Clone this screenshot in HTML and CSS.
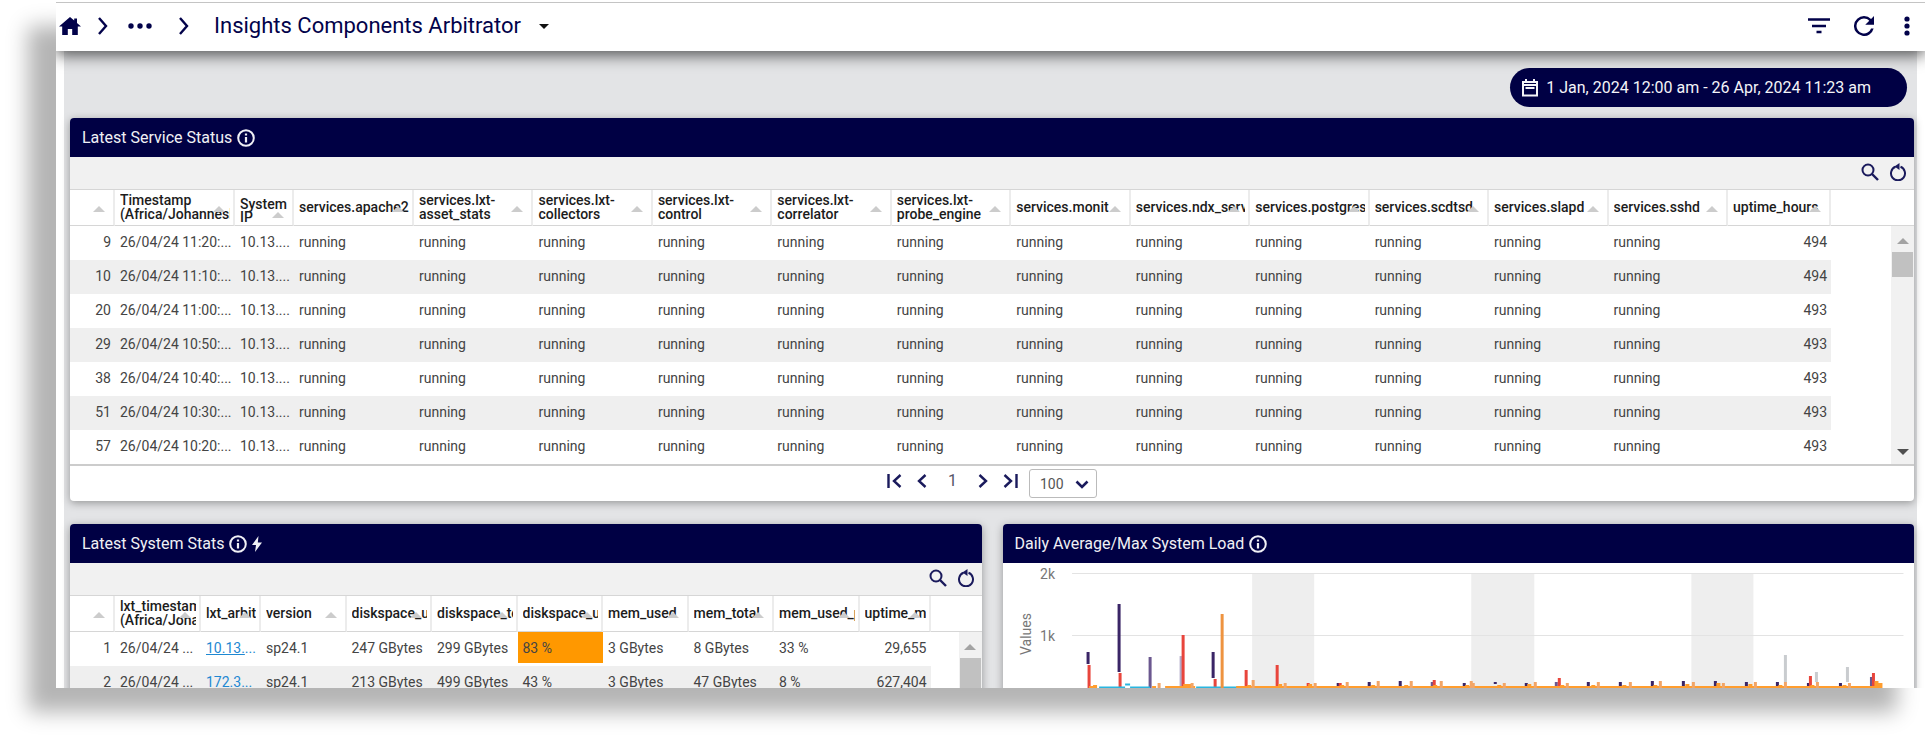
FILE: index.html
```html
<!DOCTYPE html>
<html lang="en">
<head>
    <meta charset="UTF-8">
    <title>Insights Components Arbitrator</title>
    <link rel="stylesheet" href="styles.css">
</head>
<body>

    <div class="window">
        <header class="topbar">
            <nav class="crumbs">
                <a href="#" class="home" aria-label="Home"><svg width="22" height="18" viewBox="0 0 22 18"><path d="M11 0L0 9.500h3.200V18h5.600v-6h4.400v6h5.600V9.500H22L18 6V1.500h-2.800v2.100z" fill="currentColor"/></svg></a>
                <svg class="sep" width="12" height="18" viewBox="0 0 12 18"><path d="M2 1l7 8-7 8" fill="none" stroke="currentColor" stroke-width="2.400"/></svg>
                <button class="dots" aria-label="More levels"><svg width="24" height="6" viewBox="0 0 24 6"><circle cx="3" cy="3" r="2.700"/><circle cx="12" cy="3" r="2.700"/><circle cx="21" cy="3" r="2.700"/></svg></button>
                <svg class="sep" width="12" height="18" viewBox="0 0 12 18"><path d="M2 1l7 8-7 8" fill="none" stroke="currentColor" stroke-width="2.400"/></svg>
                <button class="title">Insights Components Arbitrator <span class="caret"></span></button>
            </nav>
            <div class="actions">
                <button aria-label="Filter"><svg width="22" height="16" viewBox="0 0 22 16"><path d="M0 1.500h22M4 8h14M8.500 14h5" stroke="currentColor" stroke-width="2.400"/></svg></button>
                <button aria-label="Refresh"><svg width="20" height="20" viewBox="4 4 16 16"><path d="M17.650 6.350A7.960 7.960 0 0 0 12 4a8 8 0 1 0 7.730 10h-2.080A6 6 0 1 1 12 6c1.660 0 3.140.69 4.220 1.780L13 11h7V4z" fill="currentColor"/></svg></button>
                <button aria-label="Menu"><svg width="6" height="20" viewBox="0 0 6 20"><circle cx="3" cy="3" r="2.600"/><circle cx="3" cy="10" r="2.600"/><circle cx="3" cy="17" r="2.600"/></svg></button>
            </div>
        </header>

        <main class="board">
            <div class="range-row">
                <button class="range">
                    <svg width="16" height="18" viewBox="0 0 16 18"><path d="M1 3h14v13.500H1zM1 6h14" fill="none" stroke="currentColor" stroke-width="2"/><path d="M4 0v3M12 0v3" stroke="currentColor" stroke-width="2"/><path d="M3.500 9h9" stroke="currentColor" stroke-width="2"/></svg>
                    1 Jan, 2024 12:00 am - 26 Apr, 2024 11:23 am
                </button>
            </div>

            <section class="panel">
                <h2>Latest Service Status
                    <svg class="info" width="18" height="18" viewBox="0 0 18 18"><circle cx="9" cy="9" r="7.800" fill="none" stroke="currentColor" stroke-width="2"/><path d="M9 4.500v2M9 8v5.500" stroke="currentColor" stroke-width="2.200"/></svg>
                </h2>
                <div class="toolbar">
                    <button aria-label="Search"><svg width="18" height="18" viewBox="0 0 18 18"><circle cx="7" cy="7" r="5.500" fill="none" stroke="currentColor" stroke-width="2"/><path d="M11 11l6 6" stroke="currentColor" stroke-width="2.400"/></svg></button>
                    <button aria-label="Reset"><svg width="18" height="18" viewBox="0 0 18 18"><path d="M6.500 3.800a7 7 0 1 0 5 0" fill="none" stroke="currentColor" stroke-width="2"/><path d="M10.500 0v7L5.500 3.500z" fill="currentColor"/></svg></button>
                </div>
                <div class="grid">
                    <table>
                        <colgroup>
                            <col class="w45"><col class="w120"><col class="w59"><col class="w120">
                            <col><col><col><col><col><col><col><col><col><col><col><col class="w103">
                        </colgroup>
                        <thead>
                            <tr>
                                <th><div></div></th>
                                <th><div>Timestamp<br>(Africa/Johannesburg)</div></th>
                                <th class="low"><div>System<br>IP</div></th>
                                <th><div>services.apache2</div></th>
                                <th><div>services.lxt-<br>asset_stats</div></th>
                                <th><div>services.lxt-<br>collectors</div></th>
                                <th><div>services.lxt-<br>control</div></th>
                                <th><div>services.lxt-<br>correlator</div></th>
                                <th><div>services.lxt-<br>probe_engine</div></th>
                                <th><div>services.monit</div></th>
                                <th><div>services.ndx_server</div></th>
                                <th><div>services.postgres</div></th>
                                <th><div>services.scdtsd</div></th>
                                <th><div>services.slapd</div></th>
                                <th><div>services.sshd</div></th>
                                <th><div>uptime_hours</div></th>
                            </tr>
                        </thead>
                        <tbody>
                            <tr><td class="num">9</td><td>26/04/24 11:20:...</td><td>10.13....</td><td>running</td><td>running</td><td>running</td><td>running</td><td>running</td><td>running</td><td>running</td><td>running</td><td>running</td><td>running</td><td>running</td><td>running</td><td class="num">494</td></tr>
                            <tr><td class="num">10</td><td>26/04/24 11:10:...</td><td>10.13....</td><td>running</td><td>running</td><td>running</td><td>running</td><td>running</td><td>running</td><td>running</td><td>running</td><td>running</td><td>running</td><td>running</td><td>running</td><td class="num">494</td></tr>
                            <tr><td class="num">20</td><td>26/04/24 11:00:...</td><td>10.13....</td><td>running</td><td>running</td><td>running</td><td>running</td><td>running</td><td>running</td><td>running</td><td>running</td><td>running</td><td>running</td><td>running</td><td>running</td><td class="num">493</td></tr>
                            <tr><td class="num">29</td><td>26/04/24 10:50:...</td><td>10.13....</td><td>running</td><td>running</td><td>running</td><td>running</td><td>running</td><td>running</td><td>running</td><td>running</td><td>running</td><td>running</td><td>running</td><td>running</td><td class="num">493</td></tr>
                            <tr><td class="num">38</td><td>26/04/24 10:40:...</td><td>10.13....</td><td>running</td><td>running</td><td>running</td><td>running</td><td>running</td><td>running</td><td>running</td><td>running</td><td>running</td><td>running</td><td>running</td><td>running</td><td class="num">493</td></tr>
                            <tr><td class="num">51</td><td>26/04/24 10:30:...</td><td>10.13....</td><td>running</td><td>running</td><td>running</td><td>running</td><td>running</td><td>running</td><td>running</td><td>running</td><td>running</td><td>running</td><td>running</td><td>running</td><td class="num">493</td></tr>
                            <tr><td class="num">57</td><td>26/04/24 10:20:...</td><td>10.13....</td><td>running</td><td>running</td><td>running</td><td>running</td><td>running</td><td>running</td><td>running</td><td>running</td><td>running</td><td>running</td><td>running</td><td>running</td><td class="num">493</td></tr>
                        </tbody>
                    </table>
                    <div class="side side-wide">
                        <div class="side-head"></div>
                        <div class="scroll">
                            <span class="up"></span>
                            <span class="thumb"></span>
                            <span class="down"></span>
                        </div>
                    </div>
                </div>
                <div class="pager">
                    <button aria-label="First page"><svg width="16" height="14" viewBox="0 0 16 14"><path d="M1.500 0v14M13.500 1L7 7l6.500 6" fill="none" stroke="currentColor" stroke-width="2.400"/></svg></button>
                    <button aria-label="Previous page"><svg width="10" height="14" viewBox="0 0 10 14"><path d="M8.500 1L2 7l6.500 6" fill="none" stroke="currentColor" stroke-width="2.400"/></svg></button>
                    <span class="page">1</span>
                    <button aria-label="Next page"><svg width="10" height="14" viewBox="0 0 10 14"><path d="M1.500 1L8 7l-6.500 6" fill="none" stroke="currentColor" stroke-width="2.400"/></svg></button>
                    <button aria-label="Last page"><svg width="16" height="14" viewBox="0 0 16 14"><path d="M14.500 0v14M2.500 1L9 7l-6.500 6" fill="none" stroke="currentColor" stroke-width="2.400"/></svg></button>
                    <div class="size">
                        <select aria-label="Rows per page">
                            <option>100</option>
                        </select>
                        <svg width="14" height="9" viewBox="0 0 14 9"><path d="M1.500 1.500L7 7l5.500-5.500" fill="none" stroke="currentColor" stroke-width="2.600"/></svg>
                    </div>
                </div>
            </section>

            <div class="row">
                <section class="panel">
                    <h2>Latest System Stats
                        <svg class="info" width="18" height="18" viewBox="0 0 18 18"><circle cx="9" cy="9" r="7.800" fill="none" stroke="currentColor" stroke-width="2"/><path d="M9 4.500v2M9 8v5.500" stroke="currentColor" stroke-width="2.200"/></svg>
                        <svg width="10" height="16" viewBox="0 0 10 16"><path d="M6.500 0L0 9h4l-1 7 7-9.500H5.800z" fill="currentColor"/></svg>
                    </h2>
                    <div class="toolbar">
                        <button aria-label="Search"><svg width="18" height="18" viewBox="0 0 18 18"><circle cx="7" cy="7" r="5.500" fill="none" stroke="currentColor" stroke-width="2"/><path d="M11 11l6 6" stroke="currentColor" stroke-width="2.400"/></svg></button>
                        <button aria-label="Reset"><svg width="18" height="18" viewBox="0 0 18 18"><path d="M6.500 3.800a7 7 0 1 0 5 0" fill="none" stroke="currentColor" stroke-width="2"/><path d="M10.500 0v7L5.500 3.500z" fill="currentColor"/></svg></button>
                    </div>
                    <div class="grid">
                        <table>
                            <colgroup>
                                <col class="w45"><col class="w86"><col class="w60">
                                <col><col><col><col><col><col><col><col class="w71">
                            </colgroup>
                            <thead>
                                <tr>
                                    <th><div></div></th>
                                    <th><div>lxt_timestamp<br>(Africa/Johannesburg)</div></th>
                                    <th><div>lxt_arbitrator</div></th>
                                    <th><div>version</div></th>
                                    <th><div>diskspace_used</div></th>
                                    <th><div>diskspace_total</div></th>
                                    <th><div>diskspace_used_pct</div></th>
                                    <th><div>mem_used</div></th>
                                    <th><div>mem_total</div></th>
                                    <th><div>mem_used_pct</div></th>
                                    <th><div>uptime_mins</div></th>
                                </tr>
                            </thead>
                            <tbody>
                                <tr><td class="num">1</td><td>26/04/24 ...</td><td><a href="#">10.13.</a><span class="more">...</span></td><td>sp24.1</td><td>247 GBytes</td><td>299 GBytes</td><td class="flag"><div class="warn">83 %</div></td><td>3 GBytes</td><td>8 GBytes</td><td>33 %</td><td class="num">29,655</td></tr>
                                <tr><td class="num">2</td><td>26/04/24 ...</td><td><a href="#">172.3</a><span class="more">...</span></td><td>sp24.1</td><td>213 GBytes</td><td>499 GBytes</td><td>43 %</td><td>3 GBytes</td><td>47 GBytes</td><td>8 %</td><td class="num">627,404</td></tr>
                            </tbody>
                        </table>
                        <div class="side">
                            <div class="side-head"></div>
                            <div class="scroll">
                                <span class="up"></span>
                                <span class="thumb thumb-long"></span>
                            </div>
                        </div>
                    </div>
                </section>

                <section class="panel">
                    <h2>Daily Average/Max System Load
                        <svg class="info" width="18" height="18" viewBox="0 0 18 18"><circle cx="9" cy="9" r="7.800" fill="none" stroke="currentColor" stroke-width="2"/><path d="M9 4.500v2M9 8v5.500" stroke="currentColor" stroke-width="2.200"/></svg>
                    </h2>
                    <svg class="chart" viewBox="0 0 911 126">
                        <!-- weekends -->
                        <path class="weekend" d="M249 10h62v116h-62zM468 10h63v116h-63zM688 10h62v116h-62z"/>
                        <path class="gridline" d="M69 10.500h831M69 72.500h831"/>
                        <text class="label" x="52" y="16" text-anchor="end">2k</text>
                        <text class="label" x="52" y="78" text-anchor="end">1k</text>
                        <text class="label" x="0" y="0" text-anchor="middle" transform="translate(28 71) rotate(-90)">Values</text>

                        <path class="faint" d="M178 93v33"/>
                        <path class="soft" d="M147 94v32M868 114v12M553 119v7M429 119v7"/>
                        <path class="dark" d="M85 89v12M116 41v68M210 89v26"/>
                        <path class="dark" d="M335 120v4M366 119v5M397 118v5M461 120v4M492 119v2M523 120v3M585 119v5M617 119v5M649 118v6M680 118v6M712 118v6M743 119v4M774 119v5M805 120v4M837 120v4"/>
                        <path class="red" d="M86 102v24M117 110v16M180 72v54M212 116v10M243 107v19M274 102v24M305 120v4M337 120v5M431 117v7M556 115v9M807 113v11M870 110v16"/>
                        <path class="gray" d="M782 92v27M813 109v10M844 104v15"/>

                        <!-- baseline series -->
                        <path class="cyan" d="M96 124.500h26M122 121.500h5M127 124.500h20M193 124.500h45M320 125.500h557"/>
                        <path class="green" d="M660 125.500h110"/>
                        <path class="base" d="M162 124h30M233 124h644"/>
                        <path class="orange" d="M88 126v-3M92 126v-4M151 126v-3M182 126v-5M186 126v-5M246 126v-4M277 126v-5M307 126v-5M339 126v-4M370 126v-4M403 126v-4M432 126v-4M464 126v-4M496 126v-4M526 126v-5M559 126v-4M590 126v-4M621 126v-4M652 126v-4M684 126v-5M715 126v-6M747 126v-5M777 126v-4M809 126v-4M841 126v-4M873 126v-8M877 126v-6"/>
                        <path class="peach" d="M156 126v-6M189 126v-6M250 126v-9M282 126v-6M312 126v-6M344 126v-7M375 126v-8M408 126v-8M438 126v-8M468 126v-8M470 126v-6M501 126v-6M532 126v-7M564 126v-6M595 126v-7M627 126v-7M657 126v-8M690 126v-7M720 126v-6M752 126v-7M782 126v-7M814 126v-7M846 126v-6"/>
                        <path class="tall" d="M219 51v75"/>
                    </svg>
                </section>
            </div>
        </main>
    </div>

</body>
</html>
```
FILE: styles.css
```css
* {
    box-sizing: border-box;
}

body {
    margin: 0;
    background-color: #ffffff;
    color: #444444;
    font-family: Roboto, "Liberation Sans", sans-serif;
    font-size: 14px;
    overflow: hidden;
}

button {
    padding: 0;
    border: none;
    background: none;
    color: inherit;
    font: inherit;
    cursor: pointer;
}

svg {
    display: block;
}

.window {
    display: flex;
    flex-direction: column;
    height: calc(100vh - 53px);
    margin: 2px 2px 51px 56px;
    background-color: #e3e4e6;
    box-shadow: -28px 24px 20px #b5b5b5;
    overflow: hidden;
}

/* top bar */
.topbar {
    position: relative;
    z-index: 1;
    display: flex;
    flex: none;
    justify-content: space-between;
    align-items: center;
    height: 49px;
    padding: 0 15px 2px 3px;
    border-top: 1px solid #c4c4c4;
    background-color: #ffffff;
    color: #02024a;
    box-shadow: 0 4px 16px rgba(0, 0, 0, 0.65);
}

.topbar svg {
    fill: currentColor;
}

.crumbs {
    display: flex;
    align-items: center;
}

.home {
    margin-right: 16px;
    color: inherit;
}

.dots {
    margin: 0 26px 0 19px;
}

.title {
    display: flex;
    align-items: center;
    margin-left: 24px;
    font-size: 22px;
    line-height: 28px;
}

.caret {
    margin-left: 18px;
    border: 5px solid transparent;
    border-top-color: #111111;
    border-bottom: none;
}

.actions {
    display: flex;
    align-items: center;
    gap: 24px;
}

.actions button:last-child {
    margin-left: 6px;
}

/* dashboard */
.board {
    flex: 1;
    min-height: 0;
    padding: 17px 3px 0 6px;
    border: 8px solid #ffffff;
    border-width: 0 8px;
}

.range-row {
    display: flex;
    justify-content: flex-end;
    margin-bottom: 11px;
    padding-right: 7px;
}

.range {
    display: flex;
    align-items: center;
    gap: 8px;
    height: 39px;
    padding: 0 36px 0 12px;
    border-radius: 20px;
    background-color: #000044;
    color: #f4f4f8;
    font-size: 16px;
}

.panel {
    border-radius: 4px;
    background-color: #ffffff;
    box-shadow: 0 2px 8px rgba(0, 0, 0, 0.35);
}

.panel h2 {
    display: flex;
    align-items: center;
    gap: 5px;
    height: 39px;
    margin: 0;
    padding: 0 12px;
    border-radius: 4px 4px 0 0;
    background-color: #000044;
    color: #f0f0f5;
    font-size: 16px;
    font-weight: 400;
}

.row {
    display: grid;
    grid-template-columns: 1fr 1fr;
    gap: 21px;
    margin-top: 23px;
}

.toolbar {
    display: flex;
    justify-content: flex-end;
    align-items: center;
    gap: 10px;
    height: 33px;
    padding: 0 7px 2px 0;
    border-bottom: 1px solid #d6d6d6;
    background-color: #f1f1f1;
    color: #1a1a5c;
}

/* tables */
.grid {
    display: flex;
}

table {
    flex: 1;
    width: 0;
    table-layout: fixed;
    border-collapse: separate;
    border-spacing: 0;
}

.w45 { width: 45px; }
.w59 { width: 59px; }
.w60 { width: 60px; }
.w71 { width: 71px; }
.w86 { width: 86px; }
.w103 { width: 103px; }
.w120 { width: 120px; }

th {
    position: relative;
    height: 36px;
    padding: 0 3px 1px 5px;
    border-right: 2px solid #ececec;
    border-bottom: 1px solid #d6d6d6;
    color: #1c1c1c;
    font-weight: 500;
    line-height: 14px;
    text-align: left;
    white-space: nowrap;
}

th div {
    overflow-x: clip;
}

/* sort arrow */
th::after {
    content: "";
    position: absolute;
    right: 8px;
    top: 16px;
    border: 6px solid transparent;
    border-top: none;
    border-bottom-color: #cccccc;
}

.low div {
    padding-top: 8px;
    line-height: 13px;
}

.low::after {
    top: 22px;
}

td {
    height: 34px;
    padding: 0 4px 2px 5px;
    overflow: hidden;
    white-space: nowrap;
}

tbody tr:nth-child(even) {
    background-color: #efefef;
}

.num {
    text-align: right;
}

td a,
.more {
    color: #1e88d2;
}

.flag {
    padding: 0;
    vertical-align: top;
}

.warn {
    height: 31px;
    padding-left: 5px;
    background-color: #ff9800;
    line-height: 32px;
}

.side {
    display: flex;
    flex-direction: column;
    width: 51px;
}

.side-wide {
    width: 83px;
}

.side-head {
    height: 36px;
    border-bottom: 1px solid #d6d6d6;
}

.scroll {
    display: flex;
    flex: 1;
    flex-direction: column;
    align-items: center;
    align-self: flex-end;
    width: 23px;
    padding: 12px 0 9px;
    background-color: #f1f1f1;
}

.up,
.down {
    border: 6px solid transparent;
}

.up {
    border-top: none;
    border-bottom-color: #a3a3a3;
}

.down {
    margin-top: auto;
    border-bottom: none;
    border-top-color: #505050;
}

.thumb {
    width: 21px;
    height: 25px;
    margin-top: 8px;
    background-color: #c1c1c1;
}

.thumb-long {
    flex: 1;
    margin-bottom: -9px;
}

/* pager */
.pager {
    display: flex;
    justify-content: center;
    align-items: center;
    gap: 14px;
    height: 37px;
    border-top: 2px solid #cccccc;
    color: #1a1a5c;
}

.pager button,
.page {
    margin-bottom: 6px;
}

.page {
    padding: 0 7px;
    color: #555566;
    font-size: 16px;
}

.size {
    position: relative;
    margin-left: -3px;
}

.size select {
    width: 68px;
    height: 29px;
    padding: 0 10px;
    border: 1px solid #bbbbbb;
    border-radius: 3px;
    background-color: #ffffff;
    color: #555555;
    font: 14px Roboto, "Liberation Sans", sans-serif;
    appearance: none;
}

.size svg {
    position: absolute;
    right: 8px;
    top: 11px;
    pointer-events: none;
}

/* chart */
.chart {
    width: 100%;
}

.chart path {
    fill: none;
    stroke-width: 3;
}

.chart .weekend { fill: #eeeeee; }
.chart .gridline { stroke: #e3e3e3; stroke-width: 1; }
.chart .faint { stroke: #b3abc8; }
.chart .soft { stroke: #6b588f; }
.chart .dark { stroke: #3a2566; }
.chart .red { stroke: #e8453c; }
.chart .gray { stroke: #c9cccf; }
.chart .cyan { stroke: #29b6e0; stroke-width: 2; }
.chart .green { stroke: #8fae1b; stroke-width: 2; }
.chart .base { stroke: #ff9d2e; stroke-width: 2; }
.chart .orange { stroke: #ff9d2e; stroke-width: 4; }
.chart .peach { stroke: #f2a567; }
.chart .tall { stroke: #ee9340; }

.label {
    fill: #777777;
    font-size: 14px;
}
```
